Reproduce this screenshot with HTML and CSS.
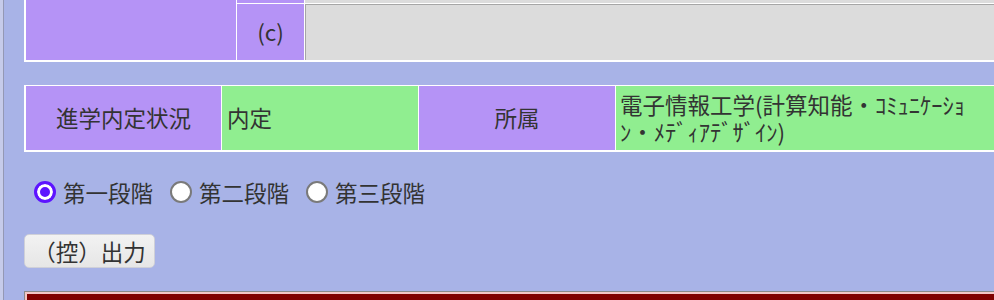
FILE: index.html
```html
<!DOCTYPE html>
<html lang="ja">
<head>
<meta charset="utf-8">
<title>進学内定状況</title>
<link rel="stylesheet" href="styles.css">
</head>
<body>
<div class="page">
  <div class="edge"></div>
  <div class="content">
    <table class="grid top">
      <tr class="r1">
        <td class="purple c1" rowspan="2"></td>
        <td class="purple c2"></td>
        <td class="grey c3"></td>
      </tr>
      <tr class="r2">
        <td class="purple c2 center">(c)</td>
        <td class="grey c3 field"></td>
      </tr>
    </table>

    <table class="grid status">
      <tr>
        <td class="purple s1 center">進学内定状況</td>
        <td class="green s2">内定</td>
        <td class="purple s3 center">所属</td>
        <td class="green s4"><div class="wrap">電子情報工学(計算知能・ｺﾐｭﾆｹｰｼｮﾝ・ﾒﾃﾞｨｱﾃﾞｻﾞｲﾝ)</div></td>
      </tr>
    </table>

    <div class="stages">
      <label class="stage"><input type="radio" name="stage" checked><span>第一段階</span></label>
      <label class="stage"><input type="radio" name="stage"><span>第二段階</span></label>
      <label class="stage"><input type="radio" name="stage"><span>第三段階</span></label>
    </div>

    <button class="out" type="button">（控）出力</button>

    <div class="bottom"><div class="bottom-inner"></div></div>
  </div>
</div>
</body>
</html>
```

FILE: styles.css
```css
html, body {
  margin: 0;
  padding: 0;
}
body {
  background: #a8b3e7;
  font-family: "Noto Sans CJK JP", "Noto Sans", sans-serif;
  font-size: 22.5px;
  color: #333333;
  overflow: hidden;
  width: 994px;
  height: 300px;
}
.page {
  display: flex;
  min-height: 300px;
}
.edge {
  width: 3px;
  flex: 0 0 3px;
  background: #c6cbea;
  border-right: 1px solid #9498b4;
}
.content {
  padding-left: 20px;
  flex: 1 1 auto;
  min-width: 0;
}
.grid {
  border-collapse: separate;
  border-spacing: 1px;
  background: #ffffff;
  border: 1px solid #ffffff;
  table-layout: fixed;
  width: 1200px;
}
.grid td {
  padding: 0;
  line-height: 1.3;
}
.purple { background: #b593f6; }
.green { background: #90ee90; }
.grey { background: #dcdcdc; }
.center { text-align: center; }

.top {
  margin-top: -1px;
  border-top: 0;
}
.top .c1 { width: 210px; }
.top .c2 { width: 67px; }
.top .r1 td { height: 3px; }
.top .r2 td { height: 55px; }
.top .field {
  border-top: 1px solid #a6a6a6;
  border-left: 1px solid #a6a6a6;
}

.status {
  margin-top: 23px;
  border-top: 0;
}
.status td { height: 64px; }
.status .s1 { width: 195px; }
.status .s2 { width: 188px; padding-left: 5px; padding-right: 3px; }
.status .s3 { width: 196px; }
.status .s4 { padding-left: 4px; }
.status .wrap {
  width: 352px;
  line-height: 27px;
}

.stages {
  display: flex;
  align-items: center;
  height: 30px;
  margin-top: 25px;
  padding-left: 10px;
}
.stage {
  display: inline-flex;
  align-items: center;
  margin-right: 17px;
}
.stage input {
  appearance: none;
  -webkit-appearance: none;
  box-sizing: border-box;
  width: 22px;
  height: 22px;
  margin: 0 7px 0 0;
  border: 2px solid #7a7a7a;
  border-radius: 50%;
  background: #ffffff;
}
.stage input:checked {
  border: 3px solid #5d14ff;
  background: #5d14ff;
  box-shadow: inset 0 0 0 3px #ffffff;
}

.out {
  display: block;
  box-sizing: border-box;
  width: 131px;
  height: 34px;
  margin-top: 27px;
  padding: 0;
  border: 1px solid #cfd0d8;
  border-radius: 5px;
  background: linear-gradient(#f2f2f2, #e6e6e6);
  font-family: "Noto Sans CJK JP", "Noto Sans", sans-serif;
  font-size: 22.5px;
  color: #333333;
  line-height: 32px;
}

.bottom {
  margin-top: 23px;
  width: 1200px;
  border: 1px solid #8a8a8a;
  padding: 2px;
  background: #f3c6c6;
}
.bottom-inner {
  height: 30px;
  background: #800000;
}
```
